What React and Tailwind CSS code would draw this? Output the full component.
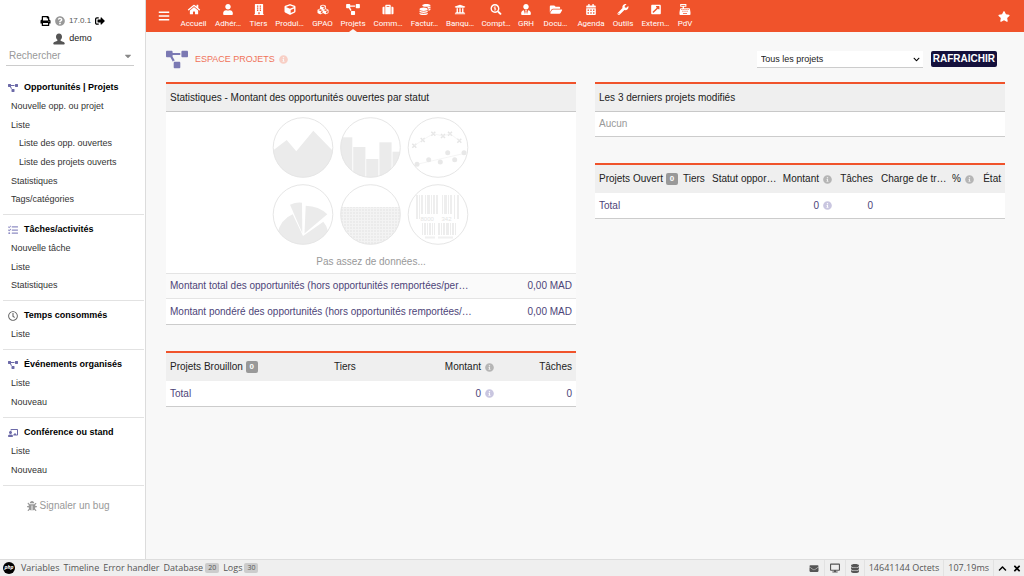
import React, { useState } from 'react';
import {
  FaBars,
  FaBug,
  FaBuilding,
  FaCalendarAlt,
  FaCaretDown,
  FaCashRegister,
  FaChalkboardTeacher,
  FaChevronDown,
  FaChevronUp,
  FaCoins,
  FaCube,
  FaCubes,
  FaDatabase,
  FaDesktop,
  FaEnvelope,
  FaExternalLinkSquareAlt,
  FaFolderOpen,
  FaHome,
  FaInfoCircle,
  FaPrint,
  FaProjectDiagram,
  FaQuestionCircle,
  FaRegClock,
  FaSearchDollar,
  FaSignOutAlt,
  FaStar,
  FaSuitcase,
  FaTasks,
  FaTimes,
  FaUniversity,
  FaUser,
  FaUserTie,
  FaWrench,
} from 'react-icons/fa';

const topMenu = [
  { label: 'Accueil', Icon: FaHome },
  { label: 'Adhér…', Icon: FaUser },
  { label: 'Tiers', Icon: FaBuilding },
  { label: 'Produi…', Icon: FaCube },
  { label: 'GPAO', Icon: FaCubes },
  { label: 'Projets', Icon: FaProjectDiagram, active: true },
  { label: 'Comm…', Icon: FaSuitcase },
  { label: 'Factur…', Icon: FaCoins },
  { label: 'Banqu…', Icon: FaUniversity },
  { label: 'Compt…', Icon: FaSearchDollar },
  { label: 'GRH', Icon: FaUserTie },
  { label: 'Docu…', Icon: FaFolderOpen },
  { label: 'Agenda', Icon: FaCalendarAlt },
  { label: 'Outils', Icon: FaWrench },
  { label: 'Extern…', Icon: FaExternalLinkSquareAlt },
  { label: 'PdV', Icon: FaCashRegister },
];

const sideMenu = [
  {
    title: 'Opportunités | Projets',
    Icon: FaProjectDiagram,
    color: 'text-[#6c6aa8]',
    height: 'min-h-[112px]',
    items: [
      { label: 'Nouvelle opp. ou projet' },
      { label: 'Liste' },
      { label: 'Liste des opp. ouvertes', sub: true },
      { label: 'Liste des projets ouverts', sub: true },
      { label: 'Statistiques' },
      { label: 'Tags/catégories' },
    ],
  },
  {
    title: 'Tâches/activités',
    Icon: FaTasks,
    color: 'text-[#8f8dc4]',
    height: 'min-h-[56px]',
    items: [{ label: 'Nouvelle tâche' }, { label: 'Liste' }, { label: 'Statistiques' }],
  },
  {
    title: 'Temps consommés',
    Icon: FaRegClock,
    color: 'text-[#666666]',
    height: 'min-h-[19px]',
    items: [{ label: 'Liste' }],
  },
  {
    title: 'Événements organisés',
    Icon: FaProjectDiagram,
    color: 'text-[#6c6aa8]',
    height: 'min-h-[38px]',
    items: [{ label: 'Liste' }, { label: 'Nouveau' }],
  },
  {
    title: 'Conférence ou stand',
    Icon: FaChalkboardTeacher,
    color: 'text-[#6c6aa8]',
    height: 'min-h-[38px]',
    items: [{ label: 'Liste' }, { label: 'Nouveau' }],
  },
];

function TopBar() {
  return (
    <header className="flex h-8 items-center bg-[#f0532b] text-white">
      <button className="ml-3 flex w-[19px] justify-start" aria-label="Menu">
        <FaBars className="h-3 w-3" />
      </button>
      <nav className="grid h-8 grid-cols-[33px_36px_25px_37px_29px_32px_38px_35px_36px_36px_24px_35px_36px_28px_37px_22px] font-[family-name:Roboto,sans-serif]">
        {topMenu.map(({ label, Icon, active }) => (
          <a
            key={label}
            href="#"
            className="relative flex flex-col items-center pt-1 text-[8px] leading-[10px] whitespace-nowrap"
          >
            <Icon className="mb-1 h-[11px] w-[14px]" />
            {label}
            {active && (
              <span className="absolute bottom-0 h-0 w-0 border-x-4 border-b-3 border-x-transparent border-b-[#f8f8f8]" />
            )}
          </a>
        ))}
      </nav>
      <button className="mr-[14px] ml-auto" aria-label="Favoris">
        <FaStar className="h-[11px] w-3" />
      </button>
    </header>
  );
}

function Sidebar() {
  return (
    <aside className="w-[146px] shrink-0 border-r border-[#dcdcdc] bg-white pt-[15px]">
      <div className="flex h-[11px] items-center justify-center gap-1 text-[8px] text-[#555555]">
        <FaPrint className="h-[10px] w-[11px] text-black" />
        <FaQuestionCircle className="h-[10px] w-[10px] text-[#999999]" />
        <span>17.0.1</span>
        <FaSignOutAlt className="h-[10px] w-[10px] text-black" />
      </div>
      <a href="#" className="mt-[6px] flex h-[14px] items-center justify-center gap-1 text-[9px] text-[#222222]">
        <svg viewBox="0 0 24 24" className="h-3 w-3">
          <path
            d="M12 1c3.800 0 6 2.600 6 6.300 0 2.500-1.200 5-2.800 6.200v2.200c2.200 1.300 7.800 1.800 8.300 5.300.2 1.300-1 2-3 2h-17c-2 0-3.200-.7-3-2 .5-3.500 6.100-4 8.300-5.300v-2.200C7.200 12.300 6 9.800 6 7.300 6 3.600 8.200 1 12 1z"
            fill="#555555"
          />
        </svg>
        demo
      </a>
      <div className="mr-[11px] ml-[6px] flex h-5 items-center border-b border-[#cccccc] pr-[2px] pl-[3px]">
        <input
          type="text"
          aria-label="Rechercher"
          placeholder="Rechercher"
          className="w-full min-w-0 bg-transparent text-[10px] leading-[14px] outline-none placeholder:text-[#999999]"
        />
        <FaCaretDown className="h-[10px] w-2 shrink-0 text-[#888888]" />
      </div>

      <nav className="pt-[13px] pr-px pl-[3px]">
        {sideMenu.map(({ title, Icon, color, height, items }) => (
          <section key={title} className="mb-[6px] border-b border-[#e2e2e2] pb-[5px]">
            <h2 className="mb-px flex h-[17px] items-center gap-[6px] pl-[5px] text-[9px] font-bold text-black">
              <Icon className={`h-[10px] w-[10px] ${color}`} />
              {title}
            </h2>
            <ul className={`grid auto-rows-fr pl-2 text-[9px] leading-[18px] text-[#333333] ${height}`}>
              {items.map((item) => (
                <li key={item.label} className={item.sub ? 'pl-2' : ''}>
                  <a href="#">{item.label}</a>
                </li>
              ))}
            </ul>
          </section>
        ))}
      </nav>
      <a href="#" className="mt-[13px] mr-2 flex items-center justify-center gap-[2px] text-[10px] leading-[14px] text-[#999999]">
        <FaBug className="h-[10px] w-[10px]" />
        Signaler un bug
      </a>
    </aside>
  );
}

// [x, width] of each bar
const bigBars = [
  [145, 2], [148, 1], [150, 2], [154, 1], [156, 3], [160, 1], [162, 2], [165, 2],
  [171, 1], [173, 3], [177, 1], [179, 2], [183, 1], [186, 2],
];
const smallBars = [
  [151, 1], [153, 2], [156, 1], [158, 2], [161, 1], [163, 1], [167, 2], [170, 1],
  [172, 2], [175, 3], [179, 1], [181, 2], [184, 1],
];

function NoDataGraph() {
  return (
    <svg viewBox="0 0 200 132" className="mx-auto block h-[132px] w-[200px]" fill="#ebebeb">
      <defs>
        <clipPath id="clip-area"><circle cx="32" cy="32.500" r="30" /></clipPath>
        <clipPath id="clip-bars"><circle cx="99.500" cy="32.500" r="30" /></clipPath>
        <clipPath id="clip-pie"><circle cx="32" cy="99.500" r="30" /></clipPath>
        <clipPath id="clip-grid"><circle cx="99.500" cy="99.500" r="30" /></clipPath>
        <pattern id="mesh" width="3" height="3" patternUnits="userSpaceOnUse">
          <rect width="3" height="3" fill="#ebebeb" />
          <path d="M0 .5H3M.5 0V3" stroke="#f3f3f3" strokeWidth="1" />
        </pattern>
      </defs>

      <path clipPath="url(#clip-area)" d="M0 37 15.700 25 25.300 36.300 42.300 15.700 64 38V66H0z" />

      <g clipPath="url(#clip-bars)">
        <rect x="69" y="22.300" width="12.300" height="44" />
        <rect x="82.200" y="32" width="12.200" height="34" />
        <rect x="95.200" y="44" width="12.200" height="22" />
        <rect x="108.400" y="27.300" width="12.200" height="40" />
        <rect x="121.500" y="36.700" width="12" height="30" />
      </g>

      <g fill="none" stroke="#e6e6e6" strokeWidth="1.500">
        {[[143.3, 30.7], [151.7, 25], [162.3, 18.7], [172, 21], [179, 18.7], [188.3, 25.7]].map(([x, y]) => (
          <path key={x} d={`M${x - 2} ${y - 2}l4 4m0 -4l-4 4`} />
        ))}
      </g>
      <g fill="none" stroke="#f1f1f1" strokeWidth="0.700">
        <path d="M143.300 30.700 151.700 25 162.300 18.700 172 21 179 18.700 188.300 25.700" />
        <path d="M146 49.300 195 38" />
      </g>
      <g fill="#e8e8e8">
        {[[146, 49.3], [157.7, 44.7], [169.3, 47], [176.7, 37.7], [183.7, 44.7], [193, 37.7]].map(([x, y]) => (
          <circle key={x} cx={x} cy={y} r="2.500" />
        ))}
      </g>

      <g clipPath="url(#clip-pie)">
        <path d="M19 89.700Q25 87 31 87.700L31.300 118z" />
        <path d="M34.700 90.700Q48 91 56.300 99.300L33.500 118.500z" />
        <path d="M21.700 99.300 32 121 52.300 106.700Q56 111 57 116V132H6V119Q10 104 21.700 99.300z" />
      </g>

      <rect clipPath="url(#clip-grid)" x="69" y="92" width="62" height="40" fill="url(#mesh)" />

      {bigBars.map(([x, w], i) => (
        <rect key={x} x={x} y="80" width={w} height={i < 2 || i > 11 ? 24 : 19} fill="#eeeeee" />
      ))}
      <text x="149.500" y="105.500" fontSize="6" fill="#e4e4e4">8000</text>
      <text x="170.500" y="105.500" fontSize="6" fill="#e4e4e4">342</text>
      {smallBars.map(([x, w]) => (
        <rect key={x} x={x} y="108" width={w} height="12" fill="#ededed" />
      ))}
      <path d="M154 122.500h10m3 0h15" stroke="#f0f0f0" strokeWidth="2" />

      <g fill="none" stroke="#e6e6e6">
        {[32, 99.5, 167].map((cx) => (
          <React.Fragment key={cx}>
            <circle cx={cx} cy="32.500" r="29.800" />
            <circle cx={cx} cy="99.500" r="29.800" />
          </React.Fragment>
        ))}
      </g>
    </svg>
  );
}

function Count() {
  return (
    <span className="inline-block rounded-[2px] bg-[#999999] px-1 align-middle text-[8px] leading-[12px] font-bold text-white">
      0
    </span>
  );
}

function Info({ className = 'text-[#b5b5b5]' }) {
  return <FaInfoCircle className={`ml-1 inline-block h-[9px] w-[9px] ${className}`} />;
}

const tableClass =
  'w-full table-fixed border-t-2 border-b border-t-[#f0532b] border-b-[#cccccc] bg-white text-left border-separate border-spacing-0';
const headClass = 'h-7 bg-[#efefef] px-1 font-normal text-[#222222] whitespace-nowrap';
const cellClass = 'h-[25px] px-1 text-[#4d4478] whitespace-nowrap';

function StatsTable() {
  return (
    <table className={tableClass}>
      <colgroup>
        <col className="w-3/4" />
        <col className="w-1/4" />
      </colgroup>
      <thead>
        <tr>
          <th colSpan={2} className={`${headClass} border-b border-[#c8c8c8]`}>
            Statistiques - Montant des opportunités ouvertes par statut
          </th>
        </tr>
      </thead>
      <tbody>
        <tr>
          <td colSpan={2} className="border-b border-[#e4e4e4] px-1 pt-[3px] pb-[2px] text-center text-[#999999]">
            <NoDataGraph />
            <div className="pt-[6px] leading-[18px]">Pas assez de données...</div>
          </td>
        </tr>
        <tr className="bg-[#fafafa]">
          <td className={`${cellClass} border-b border-[#e4e4e4]`}>
            Montant total des opportunités (hors opportunités remportées/per…
          </td>
          <td className={`${cellClass} border-b border-[#e4e4e4] text-right`}>0,00 MAD</td>
        </tr>
        <tr>
          <td className={cellClass}>
            Montant pondéré des opportunités (hors opportunités remportées/…
          </td>
          <td className={`${cellClass} text-right`}>0,00 MAD</td>
        </tr>
      </tbody>
    </table>
  );
}

function DraftTable() {
  return (
    <table className={tableClass}>
      <thead>
        <tr>
          <th className={`${headClass} w-[164px]`}>Projets Brouillon <Count /></th>
          <th className={`${headClass} w-[80px]`}>Tiers</th>
          <th className={`${headClass} w-[88px] text-right`}>Montant<Info /></th>
          <th className={`${headClass} w-[78px] text-right`}>Tâches</th>
        </tr>
      </thead>
      <tbody>
        <tr>
          <td className={cellClass} colSpan={2}>Total</td>
          <td className={`${cellClass} text-right`}>0<Info className="text-[#c9c6e0]" /></td>
          <td className={`${cellClass} text-right`}>0</td>
        </tr>
      </tbody>
    </table>
  );
}

function LatestTable() {
  return (
    <table className={tableClass}>
      <thead>
        <tr>
          <th className={`${headClass} border-b border-[#c8c8c8]`}>Les 3 derniers projets modifiés</th>
        </tr>
      </thead>
      <tbody>
        <tr>
          <td className="h-6 px-1 text-[#999999]">Aucun</td>
        </tr>
      </tbody>
    </table>
  );
}

function OpenTable() {
  return (
    <table className={tableClass}>
      <thead>
        <tr>
          <th className={`${headClass} w-[84px]`}>Projets Ouvert <Count /></th>
          <th className={`${headClass} w-[29px]`}>Tiers</th>
          <th className={`${headClass} w-[69px]`}>Statut oppor…</th>
          <th className={`${headClass} w-[59px] text-right`}>Montant<Info /></th>
          <th className={`${headClass} w-[41px] text-right`}>Tâches</th>
          <th className={`${headClass} w-[70px]`}>Charge de tr…</th>
          <th className={`${headClass} w-[31px] text-right`}>%<Info /></th>
          <th className={`${headClass} w-[27px] text-right`}>État</th>
        </tr>
      </thead>
      <tbody>
        <tr>
          <td className={cellClass} colSpan={3}>Total</td>
          <td className={`${cellClass} text-right`}>0<Info className="text-[#c9c6e0]" /></td>
          <td className={`${cellClass} text-right`}>0</td>
          <td className={cellClass} colSpan={3}></td>
        </tr>
      </tbody>
    </table>
  );
}

function DebugBar() {
  return (
    <footer className="flex h-[17px] items-center border-t border-[#dddddd] bg-[#efefef] font-['Open_Sans',sans-serif] text-[9px] text-[#555555]">
      <span className="ml-[3px] flex h-3 w-3 items-center justify-center rounded-full bg-black text-[5px] font-bold text-white italic">
        php
      </span>
      <div className="ml-[6px] flex items-center gap-1">
        <a href="#">Variables</a>
        <a href="#">Timeline</a>
        <a href="#">Error handler</a>
        <a href="#" className="flex items-center gap-[2px]">
          Database
          <span className="rounded-[2px] bg-[#cccccc] px-[3px] text-[7px] leading-[10px]">20</span>
        </a>
        <a href="#" className="flex items-center gap-[2px]">
          Logs
          <span className="rounded-[2px] bg-[#cccccc] px-[3px] text-[7px] leading-[10px]">30</span>
        </a>
      </div>
      <div className="ml-auto flex h-full items-center divide-x divide-[#e2e2e2]">
        <span className="flex h-full items-center px-[5px]"><FaEnvelope className="h-[9px] w-[10px]" /></span>
        <span className="flex h-full items-center px-[5px]"><FaDesktop className="h-[10px] w-[10px]" /></span>
        <span className="flex h-full items-center px-1"><FaDatabase className="h-[9px] w-[10px]" /></span>
        <span className="flex h-full items-center px-1">14641144 Octets</span>
        <span className="flex h-full items-center px-1">107.19ms</span>
        <span className="flex h-full items-center gap-[6px] pr-[3px] pl-1 text-black">
          <button aria-label="Ouvrir"><FaChevronUp className="h-[9px] w-[9px]" /></button>
          <button aria-label="Fermer"><FaTimes className="h-[9px] w-[8px]" /></button>
        </span>
      </div>
    </footer>
  );
}

export default function App() {
  const [filter, setFilter] = useState('all');

  return (
    <div className="flex min-h-screen flex-col bg-[#f8f8f8] font-['Liberation_Sans',Arial,sans-serif]">
      <div className="flex flex-1">
        <Sidebar />
        <div className="min-w-0 flex-1">
          <TopBar />
          <main className="pr-[19px] pl-5 text-[10px] leading-[14px]">
            {/* Title row */}
            <div className="flex h-[50px] items-center pt-1 pr-2">
              <FaProjectDiagram className="h-[19px] w-[22px] text-[#7b79b3]" />
              <h1 className="ml-[7px] text-[9px] text-[#f0735a]">ESPACE PROJETS</h1>
              <Info className="text-[#f8cfc5]" />
              <div className="relative mr-2 ml-auto flex">
                <select
                  aria-label="Projets"
                  value={filter}
                  onChange={(e) => setFilter(e.target.value)}
                  className="h-[17px] w-[166px] appearance-none border-b border-[#cccccc] bg-white pl-1 text-[9px] text-[#222222]"
                >
                  <option value="all">Tous les projets</option>
                  <option value="mine">Mes projets</option>
                </select>
                <FaChevronDown className="pointer-events-none absolute top-[5px] right-[3px] h-[7px] w-[7px] text-black" />
              </div>
              <button className="h-4 rounded-[2px] bg-[#14103c] px-[2px] font-bold text-white">
                RAFRAICHIR
              </button>
            </div>

            <div className="grid grid-cols-2 items-start gap-[19px]">
              <div className="flex flex-col gap-[26px]">
                <StatsTable />
                <DraftTable />
              </div>
              <div className="flex flex-col gap-[26px]">
                <LatestTable />
                <OpenTable />
              </div>
            </div>
          </main>
        </div>
      </div>
      <DebugBar />
    </div>
  );
}
